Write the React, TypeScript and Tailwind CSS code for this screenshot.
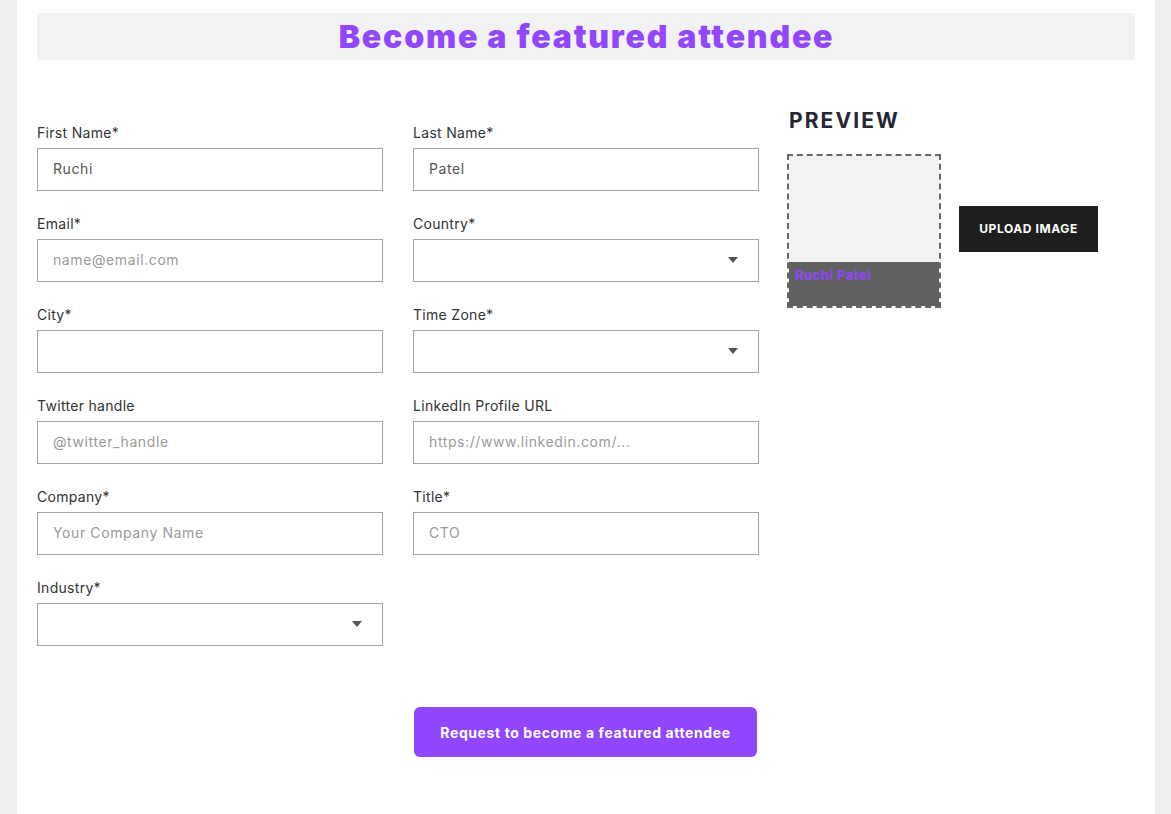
import React from "react";

const font = "font-['Inter','Liberation_Sans',sans-serif]";

function Field({
  label,
  value,
  placeholder,
  select,
}: {
  label: string;
  value?: string;
  placeholder?: string;
  select?: boolean;
}) {
  return (
    <div className="flex flex-col">
      <label className="text-[14px] leading-[21px] tracking-[0.3px] text-[#333333] mb-[5px]">{label}</label>
      <div className="relative h-[43px] border border-[#a5a5a5] bg-white flex items-center">
        {select ? (
          <>
            <div className="flex-1" />
            <span className="absolute right-[20px] top-[17px] w-0 h-0 border-l-[5px] border-r-[5px] border-t-[6px] border-l-transparent border-r-transparent border-t-[#555555]" />
          </>
        ) : (
          <input
            readOnly
            value={value ?? ""}
            placeholder={placeholder}
            className={`w-full h-full px-[15px] pb-[2px] text-[14px] tracking-[0.6px] text-[#555555] placeholder:text-[#9a9a9a] outline-none bg-transparent ${font}`}
          />
        )}
      </div>
    </div>
  );
}

export default function App() {
  return (
    <div className={`min-h-screen bg-[#efefef] pl-[17px] pr-[16px] ${font}`}>
      <div className="bg-white min-h-[814px] px-[20px] pt-[13px] pb-[40px]">
        <div className="h-[47px] bg-[#f2f2f2] flex items-center justify-center">
          <h1 className="text-[32px] leading-none font-black text-[#9146ff] tracking-[1.8px] pl-[1px]">
            Become a featured attendee
          </h1>
        </div>

        <div className="flex mt-[49px] gap-[28px]">
          <div className="w-[722px] pt-[13px]">
            <div className="grid grid-cols-2 gap-x-[30px] gap-y-[22px]">
              <Field label="First Name*" value="Ruchi" />
              <Field label="Last Name*" value="Patel" />
              <Field label="Email*" placeholder="name@email.com" />
              <Field label="Country*" select />
              <Field label="City*" />
              <Field label="Time Zone*" select />
              <Field label="Twitter handle" placeholder="@twitter_handle" />
              <Field label="LinkedIn Profile URL" placeholder="https://www.linkedin.com/..." />
              <Field label="Company*" placeholder="Your Company Name" />
              <Field label="Title*" placeholder="CTO" />
              <Field label="Industry*" select />
              <div />
              <div className="col-start-2 mt-[39px] pl-[1px]">
                <button className="w-[343px] h-[50px] rounded-[6px] bg-[#9146ff] text-white text-[14px] font-bold tracking-[0.6px]">
                  Request to become a featured attendee
                </button>
              </div>
            </div>
          </div>

          <div className="flex flex-col">
            <h2 className="text-[21px] leading-[24px] font-bold text-[#262633] pl-[2px] tracking-[2.1px]">PREVIEW</h2>
            <div className="flex items-center gap-[18px] mt-[21px]">
              <div className="w-[154px] h-[154px] border-2 border-dashed border-[#666666] bg-white flex flex-col">
                <div className="h-[106px] bg-[#f2f2f2]" />
                <div className="flex-1 bg-[#616161] pl-[6px] pt-[0px]">
                  <span className="text-[13px] leading-[16px] font-bold text-[#9146ff] tracking-[0.5px]">Ruchi Patel</span>
                </div>
              </div>
              <button className="w-[139px] h-[46px] bg-[#1f1f1f] text-white text-[12px] font-bold tracking-[0.6px] -mt-[4px]">
                UPLOAD IMAGE
              </button>
            </div>
          </div>
        </div>
      </div>
    </div>
  );
}
